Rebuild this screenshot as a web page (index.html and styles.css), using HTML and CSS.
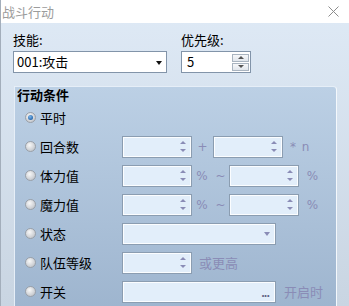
FILE: index.html
```html
<!DOCTYPE html>
<html lang="zh-CN">
<head>
  <meta charset="UTF-8">
  <title>战斗行动</title>
  <link rel="stylesheet" href="styles.css">
</head>
<body>
  <div class="window">
    <div class="titlebar">
      <span class="title">战斗行动</span>
      <svg class="close" width="11" height="11" viewBox="0 0 11 11">
        <path d="M0.5 0.5 L10.5 10.5 M10.5 0.5 L0.5 10.5" stroke="#8c8c8c" stroke-width="1" fill="none"/>
      </svg>
    </div>

    <div class="top">
      <div class="field">
        <label>技能:</label>
        <div class="select skill">
          <span class="value">001:攻击</span>
          <span class="caret"></span>
        </div>
      </div>
      <div class="field">
        <label>优先级:</label>
        <div class="spin prio">
          <span class="value">5</span>
          <span class="btns">
            <span class="btn"><span class="up"></span></span>
            <span class="btn"><span class="down"></span></span>
          </span>
        </div>
      </div>
    </div>

    <div class="group">
      <div class="legend">行动条件</div>

      <div class="row">
        <div class="opt"><span class="radio on"></span>平时</div>
      </div>

      <div class="row">
        <div class="opt"><span class="radio"></span>回合数</div>
        <div class="spin off"><span class="arrows"><span class="up"></span><span class="down"></span></span></div>
        <span class="sym plus">+</span>
        <div class="spin off"><span class="arrows"><span class="up"></span><span class="down"></span></span></div>
        <span class="sym times">* n</span>
      </div>

      <div class="row">
        <div class="opt"><span class="radio"></span>体力值</div>
        <div class="spin off"><span class="arrows"><span class="up"></span><span class="down"></span></span></div>
        <span class="sym pct">%</span>
        <span class="sym tilde">~</span>
        <div class="spin off"><span class="arrows"><span class="up"></span><span class="down"></span></span></div>
        <span class="sym pct2">%</span>
      </div>

      <div class="row">
        <div class="opt"><span class="radio"></span>魔力值</div>
        <div class="spin off"><span class="arrows"><span class="up"></span><span class="down"></span></span></div>
        <span class="sym pct">%</span>
        <span class="sym tilde">~</span>
        <div class="spin off"><span class="arrows"><span class="up"></span><span class="down"></span></span></div>
        <span class="sym pct2">%</span>
      </div>

      <div class="row">
        <div class="opt"><span class="radio"></span>状态</div>
        <div class="select off wide"><span class="caret"></span></div>
      </div>

      <div class="row">
        <div class="opt"><span class="radio"></span>队伍等级</div>
        <div class="spin off"><span class="arrows"><span class="up"></span><span class="down"></span></span></div>
        <span class="note">或更高</span>
      </div>

      <div class="row">
        <div class="opt"><span class="radio"></span>开关</div>
        <div class="select off wide"><span class="dots">...</span></div>
        <span class="note switch">开启时</span>
      </div>
    </div>
  </div>
</body>
</html>
```

FILE: styles.css
```css
body {
  margin: 0;
  width: 349px;
  height: 306px;
  overflow: hidden;
  font-family: "Noto Sans CJK SC", "DejaVu Sans", sans-serif;
  font-size: 13px;
  color: #000;
}

.window {
  height: 306px;
  border-left: 1px solid #a3aebb;
  background: linear-gradient(#dfeaf6, #c9d5e2);
}

.titlebar {
  height: 23px;
  background: #fff;
  display: flex;
  align-items: center;
  justify-content: space-between;
  padding: 0 10px 0 1px;
}

.title {
  color: #9c9c9c;
  font-size: 13px;
  line-height: 23px;
}

.top {
  display: flex;
  gap: 14px;
  padding: 8px 0 0 12px;
}

.field label {
  display: block;
  line-height: 18px;
  margin-bottom: 2px;
}

.select,
.spin {
  box-sizing: border-box;
  height: 22px;
  border: 1px solid #8294a9;
  background: #fff;
  display: flex;
  align-items: center;
}

.skill {
  width: 154px;
  padding: 0 4px 0 3px;
}

.value {
  flex: 1;
  line-height: 20px;
}

.caret {
  width: 0;
  height: 0;
  border-left: 3.5px solid transparent;
  border-right: 3.5px solid transparent;
  border-top: 4px solid #111;
  margin-top: 1px;
}

.prio {
  width: 70px;
  padding: 0 1px 0 5px;
}

.btns {
  display: flex;
  flex-direction: column;
  gap: 1px;
}

.btn {
  box-sizing: border-box;
  width: 17px;
  height: 8px;
  border: 1px solid #a9b4c0;
  background: linear-gradient(#f7f8fa, #e1e6ec);
  display: flex;
  align-items: center;
  justify-content: center;
}

.up,
.down {
  width: 0;
  height: 0;
  border-left: 3px solid transparent;
  border-right: 3px solid transparent;
}

.up {
  border-bottom: 3px solid #555;
}

.down {
  border-top: 3px solid #555;
}

.group {
  box-sizing: border-box;
  width: 323px;
  height: 230px;
  margin: 13px 0 0 13px;
  border: 1px solid #e6eef7;
  border-right-color: #f4f8fc;
  border-bottom: none;
  border-top-right-radius: 4px;
  background: linear-gradient(#bcd0e5, #9db4ce);
}

.legend {
  height: 16px;
  line-height: 16px;
  padding-left: 2px;
  font-weight: bold;
}

.row {
  height: 29px;
  display: flex;
  align-items: center;
}

.opt {
  box-sizing: border-box;
  width: 107px;
  padding-left: 10px;
  display: flex;
  align-items: center;
  gap: 4px;
  line-height: 16px;
}

.radio {
  box-sizing: border-box;
  width: 11px;
  height: 11px;
  border-radius: 50%;
  border: 1px solid #9aa0a8;
  background: radial-gradient(circle at 40% 35%, #f8f8f8, #c6c9ce 75%);
  display: flex;
  align-items: center;
  justify-content: center;
}

.radio.on::after {
  content: "";
  width: 5px;
  height: 5px;
  border-radius: 50%;
  background: radial-gradient(circle at 40% 35%, #7fb7ea, #1d5fa6 80%);
}

.off {
  border-color: #8b9db1;
  box-shadow: inset 0 0 0 1px #fbfdff;
  background: #e2eefa;
}

.spin.off {
  width: 70px;
  justify-content: flex-end;
}

.arrows {
  width: 16px;
  height: 20px;
  display: flex;
  flex-direction: column;
  align-items: center;
  justify-content: space-between;
  padding: 4px 0 5px;
  box-sizing: border-box;
}

.off .up {
  border-bottom-color: #8a8cb6;
}

.off .down {
  border-top-color: #8a8cb6;
}

.select.wide {
  width: 154px;
  justify-content: flex-end;
  padding-right: 5px;
}

.select.off .caret {
  border-top-color: #8a8cb6;
}

.dots {
  color: #5f6484;
  font-size: 11px;
  font-weight: bold;
  letter-spacing: -1px;
  line-height: 12px;
  padding-right: 1px;
}

.sym {
  color: #8a8cb6;
  font-family: "DejaVu Sans", sans-serif;
  font-size: 12px;
  text-align: center;
}

.plus {
  width: 21px;
}

.times {
  margin-left: 7px;
  letter-spacing: 1px;
}

.pct {
  width: 20px;
}

.tilde {
  width: 17px;
}

.pct2 {
  width: 27px;
}

.note {
  color: #8a8cb6;
  margin-left: 7px;
}

.note.switch {
  margin-left: 8px;
}
```
